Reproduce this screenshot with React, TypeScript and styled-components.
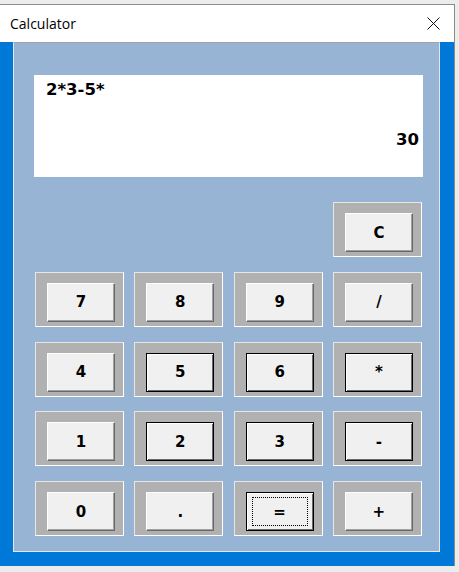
import React from 'react';
import styled, { createGlobalStyle, css } from 'styled-components';

const GlobalStyle = createGlobalStyle`
  html, body {
    margin: 0;
    padding: 0;
    background: #ececec;
  }
  body {
    font-family: "DejaVu Sans", sans-serif;
  }
`;

const Window = styled.div`
  margin-top: 4px;
  width: 455px;
  box-sizing: border-box;
  border-top: 1px solid #8c8c8c;
  border-right: 1px solid #8c8c8c;
  background: #0078d7;
`;

const TitleBar = styled.div`
  height: 37px;
  background: #fff;
  display: flex;
  align-items: center;
  justify-content: space-between;
  padding: 0 14px 0 10px;
`;

const Title = styled.span`
  font-family: "Open Sans", sans-serif;
  font-size: 14px;
  color: #000;
`;

const CloseButton = styled.button`
  width: 14px;
  height: 14px;
  padding: 0;
  border: none;
  background: transparent;
  display: flex;
  align-items: center;
  justify-content: center;
`;

const Client = styled.div`
  padding: 0 14px 14px 13px;
`;

const Panel = styled.div`
  height: 510px;
  box-sizing: border-box;
  background: #97b4d4;
  border: 1px solid #e4e8ec;
  border-top-color: #a4a4a4;
  padding: 32px 0 0 20px;
`;

const Display = styled.div`
  width: 389px;
  height: 102px;
  background: #fff;
  box-sizing: border-box;
  padding: 5px 4px 0 12px;
  display: flex;
  flex-direction: column;
  font-size: 16.5px;
  font-weight: bold;
  color: #000;
`;

const Expression = styled.div`
  text-align: left;
`;

const Result = styled.div`
  margin-top: 31px;
  text-align: right;
`;

const Keypad = styled.div`
  margin-top: 25px;
  margin-left: 1px;
  display: grid;
  grid-template-columns: repeat(4, 89px);
  grid-auto-rows: 55px;
  column-gap: 10.3px;
  row-gap: 14.75px;
`;

const KeyFrame = styled.div<{ $col?: number }>`
  box-sizing: border-box;
  background: #b1b1b1;
  border: 1px solid #fff;
  border-top-color: #e6e6e6;
  border-left-color: #e6e6e6;
  padding: 10px 8px 4px 11px;
  ${(p) => p.$col && css`grid-column: ${p.$col};`}
`;

const Key = styled.button<{ $default?: boolean; $focused?: boolean }>`
  position: relative;
  width: 100%;
  height: 100%;
  box-sizing: border-box;
  background: #f0f0f0;
  font-family: "DejaVu Sans", sans-serif;
  font-size: 15px;
  font-weight: bold;
  color: #000;
  padding: 0;
  display: flex;
  align-items: center;
  justify-content: center;
  border: 1px solid;
  border-color: #fff #696969 #696969 #fff;
  box-shadow: inset -1px -1px 0 #a0a0a0;
  ${(p) =>
    p.$default &&
    css`
      border-color: #000;
      box-shadow: inset 1px 1px 0 #fff, inset -1px -1px 0 #696969;
    `}
  ${(p) =>
    p.$focused &&
    css`
      &::after {
        content: '';
        position: absolute;
        inset: 4px 5px;
        border: 1px dotted #000;
      }
    `}
`;

type KeyDef = { label: string; def?: boolean; focus?: boolean };

const keys: KeyDef[] = [
  { label: '7' },
  { label: '8' },
  { label: '9' },
  { label: '/' },
  { label: '4' },
  { label: '5', def: true },
  { label: '6', def: true },
  { label: '*', def: true },
  { label: '1' },
  { label: '2', def: true },
  { label: '3', def: true },
  { label: '-', def: true },
  { label: '0' },
  { label: '.' },
  { label: '=', def: true, focus: true },
  { label: '+' },
];

export default function App() {
  return (
    <>
      <GlobalStyle />
      <Window>
        <TitleBar>
          <Title>Calculator</Title>
          <CloseButton aria-label="Close">
            <svg width="13" height="13" viewBox="0 0 13 13">
              <path d="M0.5 0.5 L12.5 12.5 M12.5 0.5 L0.5 12.5" stroke="#111" strokeWidth="1" />
            </svg>
          </CloseButton>
        </TitleBar>
        <Client>
          <Panel>
            <Display>
              <Expression>2*3-5*</Expression>
              <Result>30</Result>
            </Display>
            <Keypad>
              <KeyFrame $col={4}>
                <Key>C</Key>
              </KeyFrame>
              {keys.map((k) => (
                <KeyFrame key={k.label}>
                  <Key $default={k.def} $focused={k.focus}>
                    {k.label}
                  </Key>
                </KeyFrame>
              ))}
            </Keypad>
          </Panel>
        </Client>
      </Window>
    </>
  );
}
